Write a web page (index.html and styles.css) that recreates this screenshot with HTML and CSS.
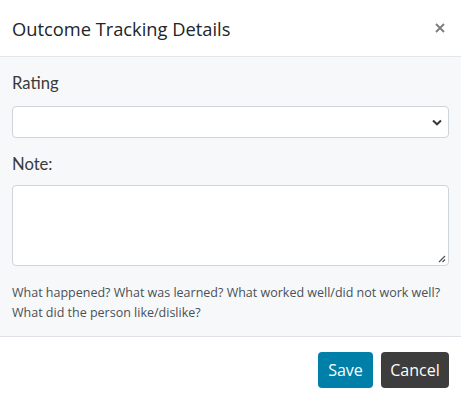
FILE: index.html
```html
<!DOCTYPE html>
<html>
<head>
<meta charset="utf-8">
<link rel="stylesheet" href="styles.css">
</head>
<body>
<div class="modal">
  <div class="modal-header">
    <h5 class="modal-title">Outcome Tracking Details</h5>
    <span class="close">
      <svg width="10" height="10" viewBox="0 0 10 10"><path d="M1 1L9 9M9 1L1 9" stroke="#808080" stroke-width="2"/></svg>
    </span>
  </div>
  <div class="modal-body">
    <label class="label">Rating</label>
    <div class="select">
      <svg class="chev" width="10" height="7" viewBox="0 0 10 7"><path d="M1 1.5L5 5.3L9 1.5" stroke="#343a40" stroke-width="2" fill="none"/></svg>
    </div>
    <label class="label note-label">Note:</label>
    <div class="textarea">
      <svg class="grip" width="8" height="8" viewBox="0 0 8 8"><path d="M7 1L1 7M7 4.5L4.5 7" stroke="#555" stroke-width="1.3"/></svg>
    </div>
    <p class="help">What happened? What was learned? What worked well/did not work well? What did the person like/dislike?</p>
  </div>
  <div class="modal-footer">
    <button class="btn btn-save">Save</button>
    <button class="btn btn-cancel">Cancel</button>
  </div>
</div>
</body>
</html>
```
FILE: styles.css
```css
* { box-sizing: border-box; }
html, body { margin: 0; padding: 0; background: #fff; }
body { font-family: "Open Sans", sans-serif; color: #212529; }
.modal { width: 461px; }
.modal-header {
  height: 57px;
  display: flex;
  align-items: center;
  justify-content: space-between;
  padding: 0 16px 0 12px;
  border-bottom: 1px solid #e3e6ea;
}
.modal-title { margin: 0; font-size: 18.3px; font-weight: 500; color: #212529; }
.close { display: flex; }
.modal-body {
  background: #f7f8fa;
  padding: 14px 12px 12px 12px;
  height: 279px;
}
.label {
  display: block;
  font-family: "Lato", sans-serif;
  font-size: 16.6px;
  line-height: 24px;
  color: #3a3a3a;
  margin-bottom: 11px;
}
.note-label { margin-top: 14px; margin-bottom: 9px; }
.select {
  height: 32px;
  background: #fff;
  border: 1px solid #ced4da;
  border-radius: 4px;
  display: flex;
  align-items: center;
  justify-content: flex-end;
  padding-right: 6px;
}
.textarea {
  height: 81px;
  background: #fff;
  border: 1px solid #ced4da;
  border-radius: 4px;
  display: flex;
  align-items: flex-end;
  justify-content: flex-end;
  padding: 0 2px 2px 0;
}
.help {
  margin: 17px 0 0 0;
  font-size: 12.5px;
  line-height: 20px;
  color: #495057;
}
.modal-footer {
  display: flex;
  justify-content: flex-end;
  gap: 8px;
  padding: 15px 12px;
  border-top: 1px solid #dee2e6;
}
.btn {
  font-family: "Open Sans", sans-serif;
  font-size: 16px;
  height: 36px;
  border: none;
  border-radius: 4px;
  color: #fff;
  padding: 0;
}
.btn-save { background: #007fa8; width: 55px; }
.btn-cancel { background: #3d3d3d; width: 68px; }
```
